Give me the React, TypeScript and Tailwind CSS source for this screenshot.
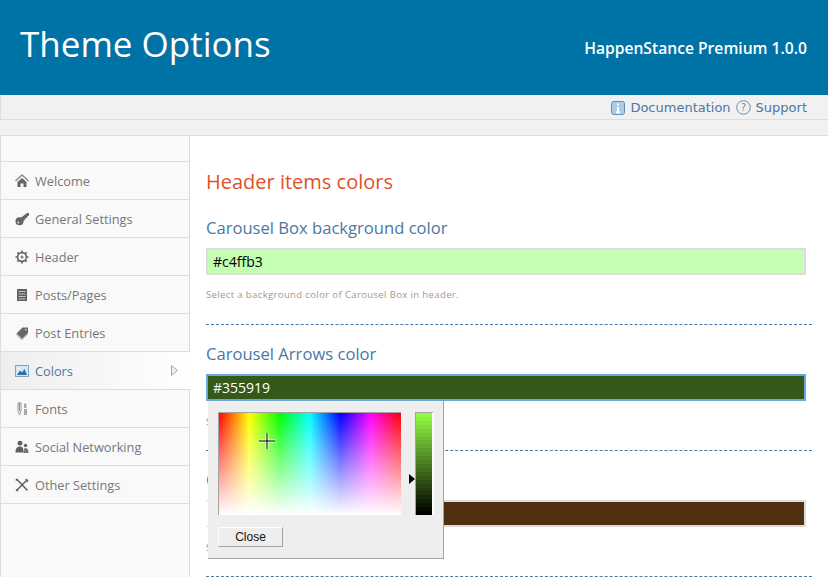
import React from 'react';

const HomeIcon = () => (
  <svg width="14" height="14" viewBox="0 0 14 14">
    <path d="M0.5 7L7 1L13.5 7" fill="none" stroke="#8a8a8a" strokeWidth="1.4" />
    <path d="M2.5 8L7 4L11.5 8V13H8.5V9.5H5.5V13H2.5Z" fill="#666666" />
  </svg>
);

const KeyIcon = () => (
  <svg width="14" height="14" viewBox="0 0 14 14">
    <circle cx="4.5" cy="9.3" r="4" fill="#666666" />
    <path d="M5.5 6L12 1L14 1L14 3.5L12.5 4.2L12 5.8L10.4 6.2L10 7.8L7.5 9.5Z" fill="#666666" />
    <circle cx="3.3" cy="10.5" r="0.9" fill="#dddddd" />
  </svg>
);

const GearIcon = () => (
  <svg width="14" height="14" viewBox="0 0 14 14">
    <circle cx="7" cy="7" r="4.4" fill="none" stroke="#666666" strokeWidth="1.6" />
    <path d="M7 0.5V2.8M7 11.2V13.5M0.5 7H2.8M11.2 7H13.5M2.4 2.4L4 4M10 10L11.6 11.6M11.6 2.4L10 4M4 10L2.4 11.6" stroke="#666666" strokeWidth="1.7" />
    <circle cx="7" cy="7" r="1.6" fill="#888888" />
  </svg>
);

const PostsIcon = () => (
  <svg width="14" height="14" viewBox="0 0 14 14">
    <rect x="2" y="1" width="10" height="12" rx="0.5" fill="#5f5f5f" />
    <path d="M3.5 3.5H10.5M3.5 6H10.5M3.5 8.5H10.5M3.5 11H10.5" stroke="#c4c4c4" strokeWidth="1" />
  </svg>
);

const TagIcon = () => (
  <svg width="14" height="14" viewBox="0 0 14 14">
    <path d="M1.5 7.5L7.5 1.5H13V7L7 13Z" fill="#666666" />
    <path d="M1 8.5L7 13.8L13 8" fill="none" stroke="#bbbbbb" strokeWidth="1" />
    <circle cx="10.8" cy="3.6" r="0.9" fill="#dddddd" />
  </svg>
);

const ImageIcon = () => (
  <svg width="14" height="12" viewBox="0 0 14 12">
    <rect x="0.5" y="0.5" width="13" height="11" fill="#d6e6f2" stroke="#7ba6c8" />
    <path d="M2 10L5 5.5L7 7.5L9.5 4L12 10Z" fill="#2f6ea3" />
    <circle cx="4" cy="3.5" r="1" fill="#ffffff" />
  </svg>
);

const FontsIcon = () => (
  <svg width="14" height="14" viewBox="0 0 14 14">
    <path d="M3 1H6V9L4.5 13L3 9Z" fill="none" stroke="#999999" strokeWidth="1" />
    <path d="M9 1.5H11.5V6H9ZM9 7H12V13H9Z" fill="#aaaaaa" />
    <path d="M4.5 1V9" stroke="#777777" strokeWidth="0.8" />
  </svg>
);

const UsersIcon = () => (
  <svg width="14" height="14" viewBox="0 0 14 14">
    <circle cx="5" cy="3.2" r="2.4" fill="#5f5f5f" />
    <path d="M0.5 12.5C0.5 8 2.5 6.5 5 6.5C7.5 6.5 8.5 8 8.5 12.5Z" fill="#5f5f5f" />
    <circle cx="10.5" cy="5.5" r="1.8" fill="#666666" />
    <path d="M8.5 13C8.5 10 9 8 10.5 8C12.5 8 13.5 10 13.5 13Z" fill="#777777" />
  </svg>
);

const ToolsIcon = () => (
  <svg width="14" height="14" viewBox="0 0 14 14">
    <path d="M2 1.5L12.5 12.5" stroke="#5f5f5f" strokeWidth="1.5" />
    <path d="M12.5 1.5L2 12" stroke="#5f5f5f" strokeWidth="1.5" />
    <path d="M0.8 2.5L2.5 0.8M10.5 1.2L13.2 3.6M1 11.5L2.8 13.2" stroke="#5f5f5f" strokeWidth="1.5" />
  </svg>
);

const menu = [
  { label: 'Welcome', icon: HomeIcon },
  { label: 'General Settings', icon: KeyIcon },
  { label: 'Header', icon: GearIcon },
  { label: 'Posts/Pages', icon: PostsIcon },
  { label: 'Post Entries', icon: TagIcon },
  { label: 'Colors', icon: ImageIcon, active: true },
  { label: 'Fonts', icon: FontsIcon },
  { label: 'Social Networking', icon: UsersIcon },
  { label: 'Other Settings', icon: ToolsIcon },
];

const steps = Array.from({ length: 26 }, (_, i) => {
  const t = 1 - i / 25;
  return `rgb(${Math.round(146 * t)},${Math.round(248 * t)},${Math.round(64 * t)})`;
});

const ColorPicker = () => (
  <div className="absolute left-[2px] top-[27px] z-10 w-[236px] h-[158px] bg-[#eeeeee] border-r border-b border-[#a3a3a3] pl-[10px] pt-[11px]">
    <div className="flex items-start">
      <div className="relative w-[183px] h-[103px] border-t border-l border-[#a3a3a3] bg-[linear-gradient(to_bottom,rgba(255,255,255,0),#ffffff),linear-gradient(to_right,#ff0000,#ffff00,#00ff00,#00ffff,#0000ff,#ff00ff,#ff0000)]">
        <svg className="absolute left-[40px] top-[20px]" width="16" height="16" viewBox="0 0 16 16">
          <path d="M8 0v16M0 8h16" stroke="#ffffff" strokeWidth="3" opacity="0.8" />
          <path d="M8 0v16M0 8h16" stroke="#000000" strokeWidth="1" />
        </svg>
      </div>
      <div className="relative ml-[14px] w-[19px] h-[103px] border-t border-l border-[#a3a3a3] border-r-2 border-r-white flex flex-col">
        {steps.map((c, i) => (
          <div key={i} className="flex-1" style={{ backgroundColor: c }} />
        ))}
        <div className="absolute left-[-7px] top-[61px] w-0 h-0 border-y-[5px] border-y-transparent border-l-[6px] border-l-black" />
      </div>
    </div>
    <button className="mt-[12px] w-[65px] h-[20px] bg-[#eeeeee] border border-t-white border-l-white border-r-[#a3a3a3] border-b-[#a3a3a3] text-[12px] text-[#111] font-['Liberation_Sans',sans-serif]">
      Close
    </button>
  </div>
);

export default function App() {
  return (
    <div className="w-[828px] h-[577px] overflow-hidden bg-[#f1f1f1] font-['Open_Sans',sans-serif]">
      <header className="h-[95px] bg-[#0073a6] flex items-center justify-between pl-[20px] pr-[21px] text-white">
        <h1 className="text-[35px] leading-none pb-[8px]">Theme Options</h1>
        <span className="text-[15.65px] font-semibold pt-[2px]">HappenStance Premium 1.0.0</span>
      </header>
      <div className="h-[25px] pt-[1px] border-l border-b border-[#dddddd] flex items-center justify-end gap-[5px] pr-[21px] text-[13px] text-[#4b77a3] font-['DejaVu_Sans',sans-serif]">
        <svg width="14" height="14" viewBox="0 0 14 14">
          <rect x="0.5" y="0.5" width="13" height="13" rx="2" fill="#a9cde4" stroke="#5b93bb" />
          <path d="M7 2.5v2M7 6v5M5 11.5h4" stroke="#ffffff" strokeWidth="2" />
        </svg>
        <span>Documentation</span>
        <svg width="15" height="15" viewBox="0 0 15 15">
          <circle cx="7.5" cy="7.5" r="6.8" fill="none" stroke="#5b93bb" />
          <text x="7.5" y="11" textAnchor="middle" fontSize="10" fill="#5b93bb">?</text>
        </svg>
        <span>Support</span>
      </div>
      <div className="mt-[15px] h-[442px] flex border-t border-l border-[#dddddd] bg-white">
        <aside className="w-[189px] shrink-0 bg-[#f9f9f9] border-r border-[#dddddd] pt-[25px]">
          <ul className="border-t border-[#dddddd]">
            {menu.map((item) => (
              <li
                key={item.label}
                className={`relative h-[38px] flex items-center pl-[14px] border-b border-[#dddddd] ${
                  item.active
                    ? 'text-[#4b77a3] w-[190px] bg-[linear-gradient(to_right,#eeeeee,#ffffff)]'
                    : 'text-[#777777]'
                }`}
              >
                <span className="w-[20px] flex items-center">
                  <item.icon />
                </span>
                <span className="text-[12.75px] pt-[2px]">{item.label}</span>
                {item.active && (
                  <svg className="absolute left-[170px] top-[13px]" width="7" height="11" viewBox="0 0 7 11">
                    <path d="M0.5 0.5L6.5 5.5L0.5 10.5Z" fill="#eeeeee" stroke="#aaaaaa" />
                  </svg>
                )}
              </li>
            ))}
          </ul>
        </aside>
        <main className="flex-1 pl-[16px] pt-[31px]">
          <h2 className="text-[20px] leading-[30px] text-[#e0512a]">Header items colors</h2>
          <section className="mt-[19px] h-[109px] border-b border-dashed border-[#4a7aa5] w-[606px]">
            <h3 className="text-[16.6px] leading-[24px] text-[#4b77a3]">Carousel Box background color</h3>
            <div className="mt-[8px] w-[600px] h-[27px] bg-[#c4ffb3] border-2 border-[#dddddd] flex items-center pl-[5px] text-[14px] text-black">
              #c4ffb3
            </div>
            <p className="mt-[13px] text-[9.5px] leading-[13px] tracking-[0.38px] text-[#999999]">Select a background color of Carousel Box in header.</p>
          </section>
          <section className="relative pt-[17px] h-[126px] border-b border-dashed border-[#4a7aa5] w-[606px]">
            <h3 className="text-[16.6px] leading-[24px] text-[#4b77a3]">Carousel Arrows color</h3>
            <div className="relative">
              <div className="mt-[8px] w-[600px] h-[27px] bg-[#355919] border-2 border-[#6aa9da] flex items-center pl-[5px] text-[14px] text-white">
                #355919
              </div>
              <ColorPicker />
            </div>
            <p className="mt-[14px] text-[9.5px] leading-[13px] tracking-[0.38px] text-[#999999]">Select a color of arrows in Carousel Box.</p>
          </section>
          <section className="pt-[17px] h-[126px] border-b border-dashed border-[#4a7aa5] w-[606px]">
            <h3 className="text-[16.6px] leading-[24px] text-[#4b77a3]">Carousel Text color</h3>
            <div className="mt-[8px] w-[600px] h-[27px] bg-[#512f11] border-2 border-[#dddddd] border-l-white flex items-center pl-[5px] text-[14px] text-white">
              #512f11
            </div>
            <p className="mt-[14px] text-[9.5px] leading-[13px] tracking-[0.38px] text-[#999999]">Select a color of text in Carousel Box.</p>
          </section>
        </main>
      </div>
    </div>
  );
}
